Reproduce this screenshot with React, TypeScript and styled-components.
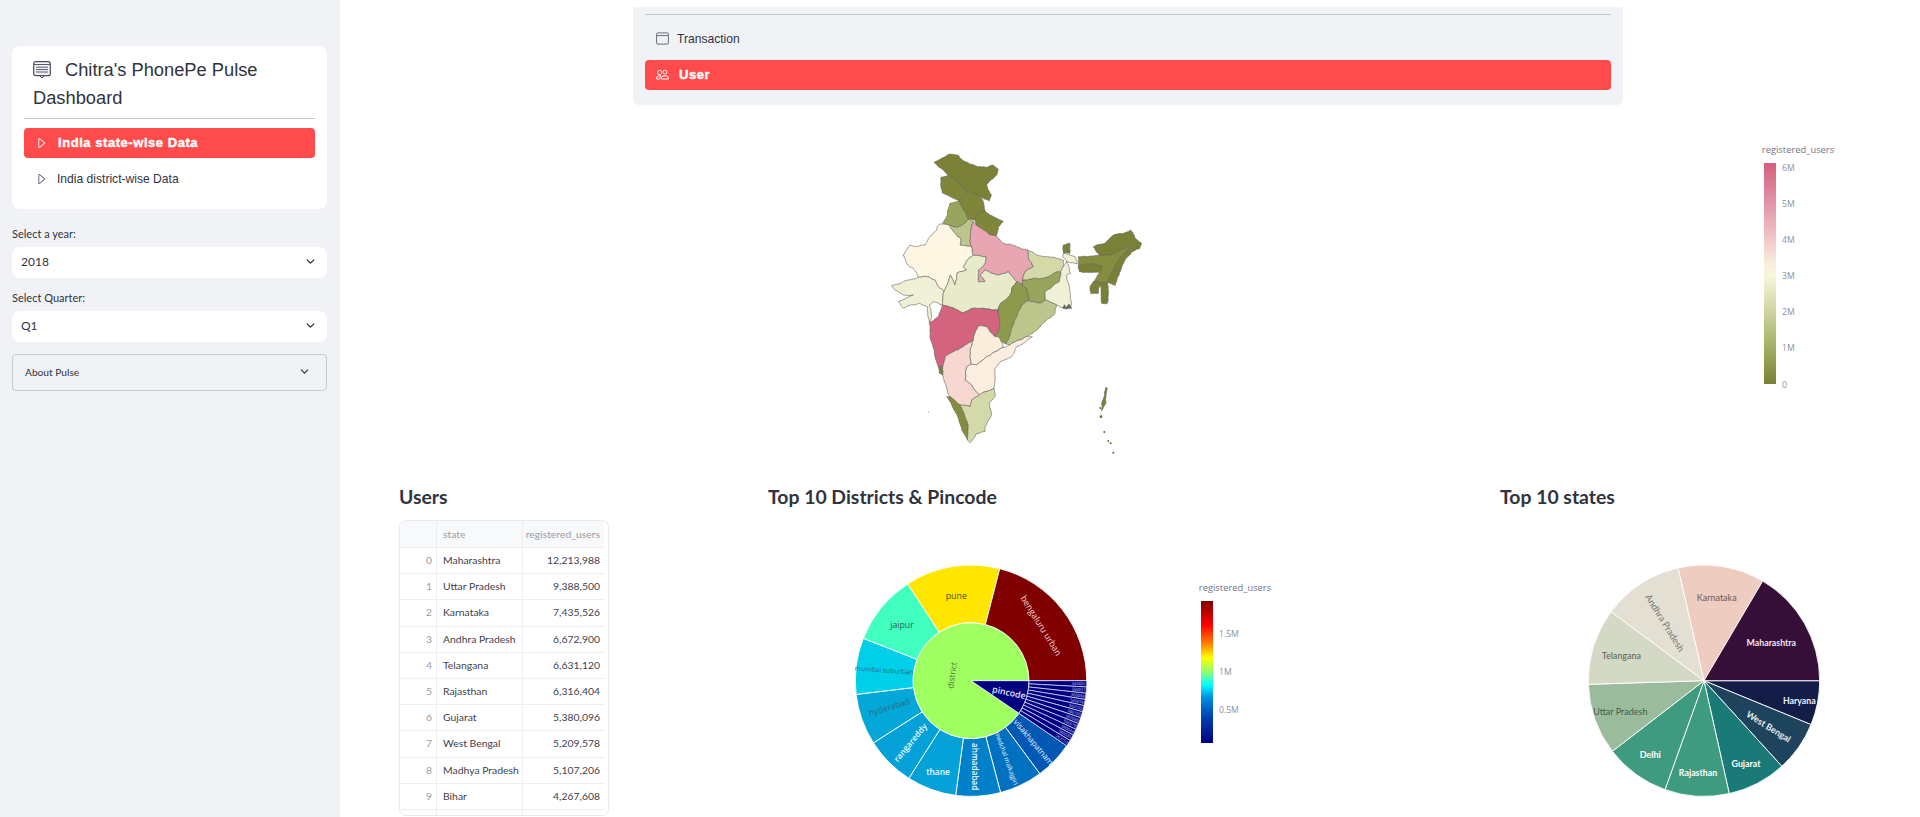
import React from "react";
import styled, { createGlobalStyle } from "styled-components";
import { BsCaretRight, BsPeople } from "react-icons/bs";
import { ChevronDown } from "lucide-react";

const Global = createGlobalStyle`
  html, body { margin: 0; height: 100%; overflow: hidden; background: #fff; }
  #root { height: 100%; }
  * { box-sizing: border-box; }
`;

const UI = `"Lato", "Open Sans", sans-serif`;
const ARIAL = `"Liberation Sans", Arial, sans-serif`;
const INK = "#31333f";

const Page = styled.div`
  display: flex;
  height: 817px;
  overflow: hidden;
  color: ${INK};
  font-family: ${UI};
`;
const Sidebar = styled.aside`
  flex: 0 0 340px;
  background: #f0f2f6;
  padding: 46px 13px 0 12px;
`;
const MenuCard = styled.div`
  background: #fff;
  border-radius: 8px;
  padding: 10px 12px 15px;
`;
const BrandTitle = styled.div`
  font: 18.3px/28px ${ARIAL};
  padding-left: 9px;
  min-height: 56px;
`;
const BrandIcon = styled.svg`
  display: inline-block;
  vertical-align: -3px;
  margin-right: 14px;
`;
const Rule = styled.hr`
  border: 0;
  border-top: 1px solid #c6c8ce;
  margin: 6px 0 9px;
`;
const MenuList = styled.div`
  display: flex;
  flex-direction: column;
  gap: 6px;
`;
const MenuItem = styled.div<{ $active?: boolean; $inset: number; $gap: number }>`
  display: flex;
  align-items: center;
  gap: ${(p) => p.$gap}px;
  height: 30px;
  padding: 0 0 1px ${(p) => p.$inset}px;
  border-radius: 4px;
  font: ${(p) => (p.$active ? "700 13px" : "400 12.1px")} ${ARIAL};
  background: ${(p) => (p.$active ? "#ff4b4b" : "transparent")};
  color: ${(p) => (p.$active ? "#fff" : INK)};
  -webkit-text-stroke: ${(p) => (p.$active ? "0.4px #fff" : "0")};
  letter-spacing: ${(p) => (p.$active ? "0.55px" : "0")};
  svg { -webkit-text-stroke: 0; flex: none; }
`;
const FieldLabel = styled.div<{ $top: number }>`
  font-size: 11px;
  line-height: 12px;
  height: 14px;
  margin: ${(p) => p.$top}px 0 5px;
`;
const Select = styled.div`
  height: 31px;
  background: #fff;
  border-radius: 8px;
  display: flex;
  align-items: center;
  justify-content: space-between;
  padding: 0 10px 2px 9px;
  font-size: 12px;
`;
const Expander = styled.div`
  height: 37px;
  margin-top: 12px;
  border: 1px solid #c8cad0;
  border-radius: 4px;
  display: flex;
  align-items: center;
  justify-content: space-between;
  padding: 0 15px 2px 12px;
  font-size: 10.2px;
`;
const Main = styled.main`
  flex: 1;
  min-width: 0;
  display: flex;
  flex-direction: column;
`;
const TopCard = styled.div`
  width: 990px;
  height: 98px;
  margin: 7px 0 0 293px;
  padding: 7px 12px 15px;
  background: #f0f2f6;
  border-radius: 0 0 6px 6px;
`;
const TopRule = styled.hr`
  border: 0;
  border-top: 1px solid #c4c6cc;
  margin: 0 0 9px;
`;
const MapRow = styled.div`
  display: flex;
  height: 330px;
  margin: 35px 0 0 530px;
`;
const LegendSvg = styled.svg<{ $left: number; $top: number }>`
  flex: none;
  margin: ${(p) => p.$top}px 0 0 ${(p) => p.$left}px;
  font-family: "Open Sans", sans-serif;
`;
const ChartSvg = styled.svg<{ $font?: string }>`
  flex: none;
  display: block;
  font-family: ${(p) => p.$font ?? `"Open Sans", sans-serif`};
`;
const Columns = styled.div`
  display: grid;
  grid-template-columns: 369px 732px 1fr;
  padding: 10px 0 0 59px;
`;
const Heading = styled.h3`
  margin: 0;
  font-size: 19.4px;
  line-height: 33px;
  font-weight: 700;
`;
const Table = styled.div`
  width: 210px;
  height: 296px;
  margin-top: 7px;
  border: 1px solid #e8e9ee;
  border-radius: 7px;
  overflow: hidden;
  font-size: 10.4px;
`;
const Row = styled.div<{ $head?: boolean }>`
  display: grid;
  grid-template-columns: 37px 86px 81px;
  width: 204px;
  height: ${(p) => (p.$head ? 27 : 26.2)}px;
  border-bottom: 1px solid #eceef1;
  background: ${(p) => (p.$head ? "#f8f9fb" : "#fff")};
`;
const Cell = styled.div<{ $kind: "idx" | "txt" | "num"; $head?: boolean }>`
  display: flex;
  align-items: center;
  padding: 0 4px 1px 6px;
  border-right: ${(p) => (p.$kind === "num" ? "0" : "1px solid #eceef1")};
  justify-content: ${(p) => (p.$kind === "txt" ? "flex-start" : "flex-end")};
  color: ${(p) => (p.$head || p.$kind === "idx" ? "#9a9ca6" : "#3f414d")};
  white-space: nowrap;
  overflow: hidden;
`;
const ChartBlock = styled.div<{ $left: number }>`
  display: flex;
  align-items: flex-start;
  margin: 37px 0 0 ${(p) => p.$left}px;
`;

type Pt = [number, number];
const hash = (x: number, y: number) => {
  const s = Math.sin(x * 12.9898 + y * 78.233) * 43758.5453;
  return s - Math.floor(s);
};
const split = (a: Pt, b: Pt, d: number): Pt[] => {
  if (d === 0) return [];
  const len = Math.hypot(a[0] - b[0], a[1] - b[1]);
  const amp = Math.min(len * 0.16, 5);
  const m: Pt = [
    (a[0] + b[0]) / 2 + (hash(a[0] + b[0], a[1] + b[1]) - 0.5) * amp,
    (a[1] + b[1]) / 2 + (hash(a[1] + b[1], a[0] - b[0]) - 0.5) * amp,
  ];
  return [...split(a, m, d - 1), m, ...split(m, b, d - 1)];
};
const jag = (s: string) => {
  const pts = s.split(" ").map((p) => p.split(",").map(Number) as Pt);
  const out: Pt[] = [];
  pts.forEach((a, i) => {
    const b = pts[(i + 1) % pts.length];
    out.push(a);
    const fwd = a[0] < b[0] || (a[0] === b[0] && a[1] < b[1]);
    const mids = fwd ? split(a, b, 3) : split(b, a, 3).reverse();
    out.push(...mids);
  });
  return out.map((p) => `${p[0].toFixed(1)},${p[1].toFixed(1)}`).join(" ");
};

const STATES: [string, string][] = [
  ["#7a8036", "192,68 215,55 240,42 262,45 280,62 300,72 325,80 352,82 370,75 385,88 380,105 362,120 350,135 355,150 365,165 358,182 340,175 322,165 300,155 290,155 262,122 235,105 213,85"],
  ["#7f8539", "213,112 235,105 262,122 290,155 275,170 268,183 245,172 218,160 212,135"],
  ["#7f8539", "290,155 300,155 322,165 338,180 343,200 345,213 325,222 315,240 295,238 280,210 268,183 275,170"],
  ["#7f8539", "345,213 360,225 380,235 400,245 385,262 378,288 360,285 338,268 318,255 315,240 325,222"],
  ["#98a55c", "240,190 268,183 280,210 295,238 278,255 262,262 237,255 218,250 232,225"],
  ["#bcc68c", "237,255 262,262 278,255 295,238 310,244 302,275 300,300 305,320 290,318 270,315 272,295 255,280 245,268"],
  ["#fdf6e3", "207,253 237,255 245,268 255,280 272,295 270,315 290,318 305,320 310,345 292,360 280,380 290,390 262,398 255,435 240,405 235,425 222,455 205,440 195,420 175,410 145,412 130,385 118,380 100,345 120,315 135,320 165,315 175,295 200,270"],
  ["#e8a5b2", "310,244 318,255 338,268 360,285 378,288 400,310 440,320 473,330 475,355 490,380 465,395 458,420 458,435 440,425 415,395 385,405 345,390 330,405 345,425 325,425 325,390 345,370 348,350 310,345 305,320 300,300 302,275"],
  ["#eff0d6", "65,437 100,425 145,412 175,410 195,420 205,440 222,455 217,495 190,485 178,495 185,530 178,548 172,500 148,490 100,505 85,485 130,465 100,465 75,450"],
  ["#e8ebc9", "222,455 235,425 240,405 255,435 262,398 290,390 280,380 292,360 310,345 348,350 345,370 325,390 325,425 345,425 330,405 345,390 385,405 415,395 440,425 425,445 418,470 392,490 385,510 340,505 305,505 280,518 262,510 217,495"],
  ["#d3637f", "217,495 262,510 280,518 305,505 340,505 385,510 388,535 390,560 375,590 350,560 325,558 310,600 280,620 250,635 225,650 218,680 205,680 195,650 180,590 178,548 205,530"],
  ["#8d9a4c", "440,425 458,435 470,445 475,482 455,495 440,530 430,555 420,585 408,612 390,600 375,590 390,560 388,535 385,510 392,490 418,470 425,445"],
  ["#98a55c", "458,420 500,415 535,410 560,395 572,395 568,425 525,455 525,480 510,490 475,482 470,445 458,435"],
  ["#d5d9a8", "473,330 500,345 530,350 560,355 580,360 580,380 572,395 560,395 535,410 500,415 458,420 465,395 490,380 475,355"],
  ["#eff0d6", "580,340 615,350 622,372 590,365 602,400 590,405 600,450 605,495 580,505 560,495 525,480 525,455 568,425 572,395 580,380 590,365 578,350"],
  ["#7a8036", "580,315 600,310 600,340 580,340"],
  ["#bcc68c", "475,482 510,490 525,480 560,495 555,520 530,540 500,570 470,590 420,615 408,612 420,585 430,555 440,530 455,495"],
  ["#faeddc", "325,558 350,560 375,590 385,590 400,622 350,650 320,675 303,672 300,630 310,600"],
  ["#fbeee0", "487,590 440,620 425,650 390,665 375,685 372,745 345,755 328,765 305,735 285,720 290,680 303,672 320,675 350,650 400,622 420,615 470,590"],
  ["#f6d8d0", "225,650 250,635 280,620 310,600 300,630 303,672 290,680 285,720 305,735 328,765 305,780 300,800 270,795 240,770 230,745 218,705 218,680"],
  ["#7a8036", "205,680 218,680 218,705 208,700"],
  ["#858c40", "230,770 240,770 270,795 285,830 295,860 292,900 275,870 258,820 245,795"],
  ["#d3d9a8", "270,795 300,800 305,780 328,765 345,755 372,745 375,770 358,790 365,820 345,860 345,875 320,880 300,908 292,900 295,860 285,830"],
  ["#7a8036", "670,320 705,310 730,285 760,280 782,270 795,295 815,310 810,325 785,335 778,318 745,335 720,345 690,345 678,335"],
  ["#858c40", "625,350 690,345 720,345 745,335 778,318 780,325 745,360 730,392 712,428 690,428 670,425 690,397 695,378 665,372 625,377"],
  ["#7a8036", "625,377 665,372 695,378 690,397 650,397 628,395"],
  ["#7a8036", "780,325 785,335 765,360 752,392 730,392 745,360"],
  ["#7a8036", "730,392 752,392 735,437 712,428"],
  ["#7a8036", "690,428 712,428 716,460 712,490 695,490"],
  ["#7a8036", "670,425 690,428 685,460 662,460 660,440"],
  ["#6a6c58", "578,503 583,494 590,502 596,492 603,500 605,505 580,505"],
  ["#7a8036", "707,742 712,745 708,790 695,812 695,790"],
];
const ISLANDS: Pt[] = [[693, 830], [703, 876], [715, 903], [722, 910], [730, 938], [691, 804], [175, 815]];

const IndiaMap = () => (
  <ChartSvg width={300} height={330} viewBox="0 0 900 990">
    {STATES.map(([fill, pts], i) => (
      <polygon key={i} points={jag(pts)} fill={fill} stroke="#62635a" strokeWidth={1.8} strokeLinejoin="round" />
    ))}
    {ISLANDS.map(([x, y], i) => (
      <circle key={i} cx={x} cy={y} r={i === 0 ? 4 : i === 6 ? 1.5 : 3} fill="#5f6a35" />
    ))}
  </ChartSvg>
);

type LegendProps = {
  id: string;
  barHeight: number;
  stops: [number, string][];
  ticks: [string, number][];
  left: number;
  top: number;
};
const ColorBar = ({ id, barHeight, stops, ticks, left, top }: LegendProps) => (
  <LegendSvg width={92} height={barHeight + 36} $left={left} $top={top}>
    <defs>
      <linearGradient id={id} x1="0" y1="0" x2="0" y2="1">
        {stops.map(([o, c]) => (
          <stop key={o} offset={`${o}%`} stopColor={c} />
        ))}
      </linearGradient>
    </defs>
    <text x={43} y={13} textAnchor="middle" fontSize={9.4} fill="#73768a">registered_users</text>
    <rect x={9} y={23} width={12} height={barHeight} fill={`url(#${id})`} />
    {ticks.map(([t, y]) => (
      <text key={t} x={27} y={y + 3} fontSize={8.6} fill="#8a8da0">{t}</text>
    ))}
  </LegendSvg>
);

const rad = (a: number) => (a * Math.PI) / 180;
const sector = (cx: number, cy: number, r0: number, r1: number, a0: number, a1: number) => {
  const p = (r: number, a: number) => `${(cx + r * Math.cos(rad(a))).toFixed(2)} ${(cy + r * Math.sin(rad(a))).toFixed(2)}`;
  const large = a1 - a0 > 180 ? 1 : 0;
  if (r0 === 0) return `M${cx} ${cy}L${p(r1, a0)}A${r1} ${r1} 0 ${large} 1 ${p(r1, a1)}Z`;
  return `M${p(r0, a0)}L${p(r1, a0)}A${r1} ${r1} 0 ${large} 1 ${p(r1, a1)}L${p(r0, a1)}A${r0} ${r0} 0 ${large} 0 ${p(r0, a0)}Z`;
};

type Label = [string, number, number, number, number, string, number?];
const SliceText = ({ l }: { l: Label }) => (
  <text
    transform={`translate(${(l[1] / 3).toFixed(1)} ${(l[2] / 3).toFixed(1)}) rotate(${l[3]})`}
    textAnchor="middle"
    dominantBaseline="central"
    fontSize={l[4]}
    fill={l[5]}
    fontWeight={l[6] ?? 400}
  >
    {l[0]}
  </text>
);

const RING: [number, number, string][] = [
  [34.2, 53.5, "#0058b4"],
  [53.5, 75.2, "#0070c0"],
  [75.2, 97.6, "#0080c8"],
  [97.6, 122.5, "#04a1d8"],
  [122.5, 147.5, "#04a1d8"],
  [147.5, 173.2, "#04a8d8"],
  [173.2, 201.5, "#00cfea"],
  [201.5, 236.8, "#40ffbf"],
  [236.8, 284.4, "#ffe600"],
  [284.4, 360, "#800000"],
];
const SUN_LABELS: Label[] = [
  ["bengaluru urban", 603, 227, 58, 8.8, "#f3dcdc"],
  ["pune", 349, 137, 0, 8.8, "#4a4a20"],
  ["jaipur", 186, 226, 0, 8.8, "#2f5f50"],
  ["mumbai suburban", 132, 360, 4, 6.8, "#1f6f80"],
  ["hyderabad", 147, 470, -17, 8.4, "#2b6a80"],
  ["rangareddy", 210, 577, -50, 8.4, "#f0fbff", 600],
  ["thane", 294, 663, 0, 8.4, "#f0fbff", 600],
  ["ahmadabad", 407, 650, 90, 8.2, "#f0fbff", 600],
  ["medchal malkajgiri", 500, 625, 70, 6.4, "#e8f4ff"],
  ["visakhapatnam", 582, 575, 50, 8, "#e8f0ff"],
  ["pincode", 507, 428, 12, 8.8, "#e4e4ff", 600],
  ["district", 335, 376, -82, 8.4, "#55703a"],
];
const PINS = ["560001", "560037", "560068", "560076", "560103", "560100", "560066", "560078", "560043", "560035", "263153"];
const Sunburst = () => {
  const cx = 131;
  const cy = 130.7;
  const step = 34.2 / PINS.length;
  return (
    <ChartSvg width={280} height={267}>
      <path d={sector(cx, cy, 0, 58, 34.2, 360)} fill="#9fff60" stroke="#fff" strokeWidth={0.8} />
      <path d={sector(cx, cy, 0, 58, 0, 34.2)} fill="#000080" stroke="#fff" strokeWidth={0.8} />
      {RING.map(([a, b, c]) => (
        <path key={a} d={sector(cx, cy, 58, 115.7, a, b)} fill={c} stroke="#fff" strokeWidth={0.9} />
      ))}
      {PINS.map((pin, i) => {
        const a0 = i * step;
        const mid = a0 + step / 2;
        return (
          <g key={pin}>
            <path d={sector(cx, cy, 58, 115.7, a0, a0 + step)} fill="#000080" stroke="#dfe3f5" strokeWidth={0.7} />
            <text
              transform={`translate(${cx + 108 * Math.cos(rad(mid))} ${cy + 108 * Math.sin(rad(mid))}) rotate(${mid})`}
              textAnchor="middle"
              dominantBaseline="central"
              fontSize={4}
              fill="#d8dcff"
            >
              {pin}
            </text>
          </g>
        );
      })}
      {SUN_LABELS.map((l) => (
        <SliceText key={l[0]} l={l} />
      ))}
    </ChartSvg>
  );
};

const PIE: [number, number, string][] = [
  [0, 22.3, "#141d48"],
  [22.3, 47.7, "#1d445c"],
  [47.7, 77.4, "#1a7a78"],
  [77.4, 109.7, "#3f9b80"],
  [109.7, 142.4, "#3f9b80"],
  [142.4, 178.2, "#9abc9c"],
  [178.2, 216.6, "#d3d9c4"],
  [216.6, 257.1, "#e4dfd3"],
  [257.1, 300.5, "#eeccbf"],
  [300.5, 360, "#360f38"],
];
const PIE_LABELS: Label[] = [
  ["Maharashtra", 604, 277, 0, 8.8, "#f0e6f0", 700],
  ["Karnataka", 440, 141, 0, 9, "#6b5a55"],
  ["Andhra Pradesh", 285, 218, 58, 9.4, "#77756c"],
  ["Telangana", 154, 316, 0, 9, "#5c6055"],
  ["Uttar Pradesh", 151, 484, 0, 9, "#465a4c"],
  ["Delhi", 241, 612, 0, 9, "#fff", 700],
  ["Rajasthan", 384, 666, 0, 8.8, "#fff", 700],
  ["Gujarat", 528, 640, 0, 8.8, "#fff", 700],
  ["West Bengal", 596, 529, 32, 9, "#e4ecf0", 700],
  ["Haryana", 688, 451, 0, 8.8, "#f0f0f8", 700],
];
const Pie = () => (
  <ChartSvg width={280} height={267} $font={UI}>
    {PIE.map(([a, b, c]) => (
      <path key={a} d={sector(134, 130.7, 0, 115.7, a, b)} fill={c} stroke="#fff" strokeWidth={0.9} />
    ))}
    {PIE_LABELS.map((l) => (
      <SliceText key={l[0]} l={l} />
    ))}
  </ChartSvg>
);

const TABLE: [string, string][] = [
  ["Maharashtra", "12,213,988"],
  ["Uttar Pradesh", "9,388,500"],
  ["Karnataka", "7,435,526"],
  ["Andhra Pradesh", "6,672,900"],
  ["Telangana", "6,631,120"],
  ["Rajasthan", "6,316,404"],
  ["Gujarat", "5,380,096"],
  ["West Bengal", "5,209,578"],
  ["Madhya Pradesh", "5,107,206"],
  ["Bihar", "4,267,608"],
];

const MAP_STOPS: [number, string][] = [[0, "#d6607e"], [19, "#e296ab"], [35, "#f2c9c9"], [45, "#f9ecdd"], [51, "#f7f7df"], [67, "#cfd4a0"], [84, "#a3ae62"], [100, "#7a8036"]];
const JET_STOPS: [number, string][] = [[0, "#800000"], [17, "#ff0000"], [30, "#ff8000"], [40, "#ffff00"], [51, "#80ff80"], [59, "#00ffff"], [68, "#0090e0"], [82, "#0040b0"], [100, "#000080"]];

const BrandGlyph = () => (
  <BrandIcon width={18} height={18} viewBox="0 0 18 18" fill="none">
    <rect x="0.7" y="0.7" width="16.6" height="14" rx="2" fill="#f3f4f8" stroke="#4a4e60" strokeWidth="1.2" />
    <path d="M1 3.5h16M3 6.2h12M3 8.6h12M3 11h12" stroke="#55596b" strokeWidth="1" />
    <path d="M7 15l2 2 2-2" stroke="#4a4e60" strokeWidth="1" />
  </BrandIcon>
);
const WindowGlyph = () => (
  <svg width={13} height={13} viewBox="0 0 13 13" fill="none">
    <rect x="0.6" y="0.9" width="11.8" height="11.2" rx="1.2" stroke="#6b6e7a" strokeWidth="1" />
    <path d="M0.6 3.6h11.8" stroke="#6b6e7a" strokeWidth="1" />
  </svg>
);

export default function App() {
  return (
    <Page>
      <Global />
      <Sidebar>
        <MenuCard>
          <BrandTitle><BrandGlyph />Chitra's PhonePe Pulse Dashboard</BrandTitle>
          <Rule />
          <MenuList>
            <MenuItem $active $inset={10} $gap={10}><BsCaretRight size={14} color="#fff" />India state-wise Data</MenuItem>
            <MenuItem $inset={10} $gap={9}><BsCaretRight size={14} color="#555a70" />India district-wise Data</MenuItem>
          </MenuList>
        </MenuCard>
        <FieldLabel $top={19}>Select a year:</FieldLabel>
        <Select>2018<ChevronDown size={13} strokeWidth={2.6} /></Select>
        <FieldLabel $top={14}>Select Quarter:</FieldLabel>
        <Select>Q1<ChevronDown size={13} strokeWidth={2.6} /></Select>
        <Expander>About Pulse<ChevronDown size={13} strokeWidth={2.2} /></Expander>
      </Sidebar>
      <Main>
        <TopCard>
          <TopRule />
          <MenuList>
            <MenuItem $inset={11} $gap={8}><WindowGlyph />Transaction</MenuItem>
            <MenuItem $active $inset={11} $gap={10}><BsPeople size={13} color="#fff" />User</MenuItem>
          </MenuList>
        </TopCard>
        <MapRow>
          <IndiaMap />
          <ColorBar
            id="mapScale"
            barHeight={221}
            stops={MAP_STOPS}
            left={585}
            top={0}
            ticks={[["6M", 28], ["5M", 64], ["4M", 100], ["3M", 136], ["2M", 172], ["1M", 208], ["0", 245]]}
          />
        </MapRow>
        <Columns>
          <div>
            <Heading>Users</Heading>
            <Table>
              <Row $head>
                <Cell $kind="idx" $head />
                <Cell $kind="txt" $head>state</Cell>
                <Cell $kind="num" $head>registered_users</Cell>
              </Row>
              {TABLE.map(([s, v], i) => (
                <Row key={s}>
                  <Cell $kind="idx">{i}</Cell>
                  <Cell $kind="txt">{s}</Cell>
                  <Cell $kind="num">{v}</Cell>
                </Row>
              ))}
              <Row>
                <Cell $kind="idx" />
                <Cell $kind="txt" />
                <Cell $kind="num" />
              </Row>
            </Table>
          </div>
          <div>
            <Heading>Top 10 Districts &amp; Pincode</Heading>
            <ChartBlock $left={72}>
              <Sunburst />
              <ColorBar
                id="jetScale"
                barHeight={142}
                stops={JET_STOPS}
                left={72}
                top={28}
                ticks={[["1.5M", 56], ["1M", 94], ["0.5M", 132]]}
              />
            </ChartBlock>
          </div>
          <div>
            <Heading>Top 10 states</Heading>
            <ChartBlock $left={70}>
              <Pie />
            </ChartBlock>
          </div>
        </Columns>
      </Main>
    </Page>
  );
}
